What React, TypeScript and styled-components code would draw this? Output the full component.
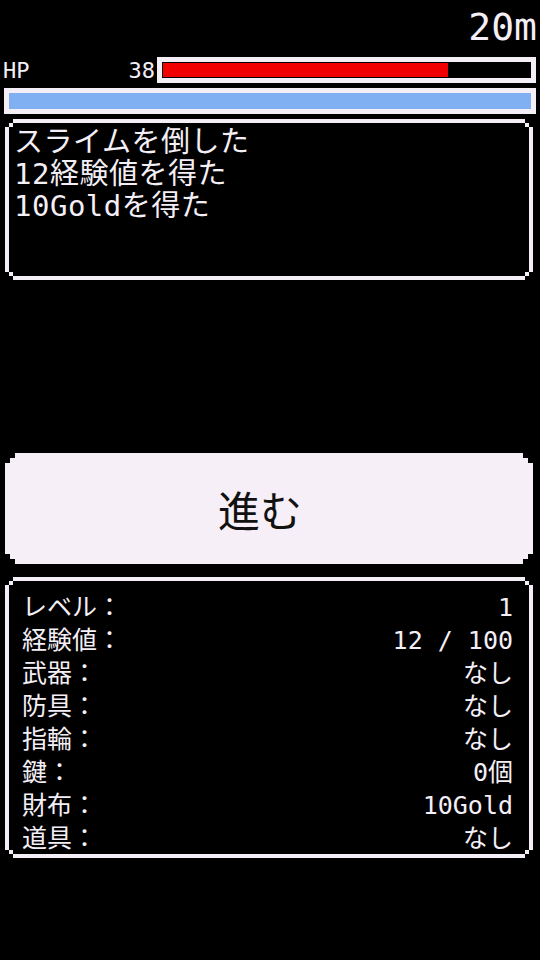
import styled, { createGlobalStyle } from 'styled-components';

const GlobalStyle = createGlobalStyle`
    html, body {
        margin: 0;
        padding: 0;
        background: #000;
    }
    body {
        font-family: "DejaVu Sans Mono", "Noto Sans CJK JP", monospace;
        color: #f4eff6;
    }
`;

const FRAME = '#f4eff6';

// staircase corner used by every pixel window
const stairs = (s: number) => `polygon(
    0 ${2 * s}px, ${s}px ${2 * s}px, ${s}px ${s}px, ${2 * s}px ${s}px, ${2 * s}px 0,
    calc(100% - ${2 * s}px) 0, calc(100% - ${2 * s}px) ${s}px, calc(100% - ${s}px) ${s}px, calc(100% - ${s}px) ${2 * s}px, 100% ${2 * s}px,
    100% calc(100% - ${2 * s}px), calc(100% - ${s}px) calc(100% - ${2 * s}px), calc(100% - ${s}px) calc(100% - ${s}px), calc(100% - ${2 * s}px) calc(100% - ${s}px), calc(100% - ${2 * s}px) 100%,
    ${2 * s}px 100%, ${2 * s}px calc(100% - ${s}px), ${s}px calc(100% - ${s}px), ${s}px calc(100% - ${2 * s}px), 0 calc(100% - ${2 * s}px)
)`;

const notch = (s: number) => `polygon(
    ${s}px 0, calc(100% - ${s}px) 0, calc(100% - ${s}px) ${s}px, 100% ${s}px,
    100% calc(100% - ${s}px), calc(100% - ${s}px) calc(100% - ${s}px), calc(100% - ${s}px) 100%, ${s}px 100%,
    ${s}px calc(100% - ${s}px), 0 calc(100% - ${s}px), 0 ${s}px, ${s}px ${s}px
)`;

const Screen = styled.div`
    width: 540px;
    height: 960px;
    display: flex;
    flex-direction: column;
    background: #000;
    overflow: hidden;
`;

const Depth = styled.div`
    height: 50px;
    padding-right: 3px;
    text-align: right;
    font-size: 38px;
    line-height: 54px;
`;

const HpRow = styled.div`
    display: grid;
    grid-template-columns: 110px 40px 1fr;
    gap: 2px;
    align-items: center;
    height: 26px;
    margin-top: 7px;
    padding: 0 4px 0 3px;
    font-size: 22px;
`;

const HpValue = styled.span`
    text-align: right;
`;

const Gauge = styled.div<{ $inset: number }>`
    height: 100%;
    box-sizing: border-box;
    border: 5px solid ${FRAME};
    background: #000;
    padding: ${(p) => p.$inset}px;
    display: flex;
`;

const Fill = styled.div<{ $color: string }>`
    height: 100%;
    background: ${(p) => p.$color};
`;

const MpRow = styled.div`
    height: 26px;
    margin: 5px 4px 0 4px;
`;

const Window = styled.div<{ $height: number; $top: number }>`
    margin: ${(p) => p.$top}px 7px 0 5px;
    height: ${(p) => p.$height}px;
    background: ${FRAME};
    padding: 4px;
    box-sizing: border-box;
    clip-path: ${stairs(4)};
`;

const WindowBody = styled.div`
    height: 100%;
    background: #000;
    clip-path: ${notch(4)};
    box-sizing: border-box;
`;

const Log = styled.div`
    padding: 3px 0 0 5px;
    font-size: 29px;
    line-height: 32px;
    letter-spacing: 0.5px;
`;

const Spacer = styled.div`
    flex: 0 0 173px;
`;

const Advance = styled.button`
    margin: 0 7px 0 5px;
    padding: 0 18px 0 0;
    height: 111px;
    border: none;
    background: #f6eff7;
    clip-path: ${stairs(5)};
    color: #111;
    font-family: "Noto Sans CJK JP", sans-serif;
    font-size: 42px;
    cursor: pointer;
`;

const Stats = styled.div`
    padding: 10px 16px 0 13px;
    display: flex;
    flex-direction: column;
`;

const StatRow = styled.div`
    display: flex;
    justify-content: space-between;
    font-size: 25px;
    line-height: 33px;
    height: 33px;
`;

const hp = 38;
const maxHp = 49;

const stats: [string, string][] = [
    ['レベル：', '1'],
    ['経験値：', '12 / 100'],
    ['武器：', 'なし'],
    ['防具：', 'なし'],
    ['指輪：', 'なし'],
    ['鍵：', '0個'],
    ['財布：', '10Gold'],
    ['道具：', 'なし'],
];

const App = () => (
    <>
        <GlobalStyle />
        <Screen>
            <Depth>20m</Depth>
            <HpRow>
                <span>HP</span>
                <HpValue>{hp}</HpValue>
                <Gauge $inset={1}>
                    <Fill $color='#f00000' style={{ width: `${(hp / maxHp) * 100}%` }} />
                </Gauge>
            </HpRow>
            <MpRow>
                <Gauge $inset={0}>
                    <Fill $color='#80b0f2' style={{ width: '100%' }} />
                </Gauge>
            </MpRow>
            <Window $height={161} $top={5}>
                <WindowBody>
                    <Log>
                        <div>スライムを倒した</div>
                        <div>12経験値を得た</div>
                        <div>10Goldを得た</div>
                    </Log>
                </WindowBody>
            </Window>
            <Spacer />
            <Advance>進む</Advance>
            <Window $height={281} $top={13}>
                <WindowBody>
                    <Stats>
                        {stats.map(([label, value]) => (
                            <StatRow key={label}>
                                <span>{label}</span>
                                <span>{value}</span>
                            </StatRow>
                        ))}
                    </Stats>
                </WindowBody>
            </Window>
        </Screen>
    </>
);

export default App;
